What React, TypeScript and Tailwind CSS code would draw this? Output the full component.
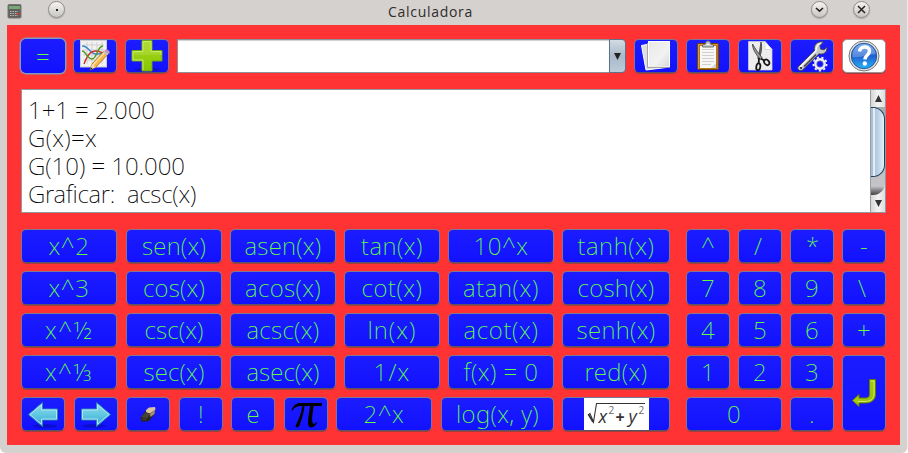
import { useLayoutEffect, useRef, useState } from "react";
import type { ReactNode } from "react";

const FONT = "font-['Noto_Sans','Open_Sans',sans-serif] font-extralight";

/** Text whose tracking is tuned at run time so it takes exactly `w` pixels. */
function Label({ text, w, className = "" }: { text: string; w: number; className?: string }) {
  const ref = useRef<HTMLSpanElement>(null);
  const [space, setSpace] = useState(0);
  useLayoutEffect(() => {
    const el = ref.current;
    if (!el) return;
    const previous = el.style.letterSpacing;
    el.style.letterSpacing = "0px";
    const natural = el.getBoundingClientRect().width;
    el.style.letterSpacing = previous;
    setSpace((w - natural) / text.length);
  }, [text, w]);
  return (
    <span ref={ref} className={`inline-block whitespace-pre ${className}`} style={{ letterSpacing: `${space}px` }}>
      {text}
    </span>
  );
}

const KEY =
  "flex h-[34px] items-center justify-center overflow-hidden rounded-[5px] border border-[#7d7794] border-b-[#5d5363] bg-linear-to-b from-[#1c1cff] to-[#1111ff] shadow-[0_1px_0_#a0403e]";

function Key({ text, w, className = "" }: { text: string; w: number; className?: string }) {
  return (
    <button className={`${KEY} ${FONT} text-[24px] leading-[32px] text-[#62ff42] ${className}`}>
      <Label text={text} w={w} />
    </button>
  );
}

function IconKey({ children, className = "" }: { children: ReactNode; className?: string }) {
  return <button className={`${KEY} ${className}`}>{children}</button>;
}

function GraphIcon() {
  return (
    <svg width="32" height="32" viewBox="0 0 32 32">
      <rect x="1.5" y=".5" width="26" height="26.500" fill="#f2f2f2" stroke="#ccc" />
      <path d="M4 5h21M4 10h21M4 15h21M4 20h21M8 2v22M13 2v22M18 2v22M23 2v22" stroke="#cfcfcf" fill="none" />
      <path d="M3 6c7 0 8 8 14 8 4 0 5-1 7 0" stroke="#3b87c8" strokeWidth="1.4" fill="none" />
      <path d="M5 24c3-8 6-13 12-13 4 0 5 2 8 2" stroke="#cc2b2b" strokeWidth="1.4" fill="none" />
      <path d="M3 11c4 0 5 8 10 8s5-13 11-13" stroke="#4b9a22" strokeWidth="1.4" fill="none" />
      <path d="M11 30l2-6L25 11l4 3-12 13z" fill="#f7b64c" stroke="#a96b1c" strokeWidth=".8" />
      <path d="M14 25L26 12" stroke="#ffe3a4" strokeWidth="1.3" />
      <path d="M24 12l2-2 4 3-2 2.500z" fill="#b9c3ce" />
      <path d="M26 10.500c2-2 6 1 4 3.200z" fill="#dc9bc9" stroke="#9a6da0" strokeWidth=".6" />
      <path d="M11 30l2-6 4 3z" fill="#f4d8a8" />
      <path d="M11 30l.9-2.700 1.700 1.500z" fill="#222" />
    </svg>
  );
}

function PlusIcon() {
  return (
    <svg width="34" height="32" viewBox="0 0 34 32">
      <defs>
        <linearGradient id="plus" x1="0" y1="0" x2="0" y2="1">
          <stop offset="0" stopColor="#a7d426" />
          <stop offset="1" stopColor="#88c800" />
        </linearGradient>
      </defs>
      <ellipse cx="17" cy="29.500" rx="13" ry="1.800" fill="#1015c8" />
      <path d="M12 .5h10v10h10v10.500h-10v10h-10v-10h-10v-10.500h10z" fill="url(#plus)" stroke="#6ea40c" />
      <path d="M13 30V20h-10v-8.500h10V1.500h8v10h10v3" fill="none" stroke="#c9ee6b" />
      <path d="M3 14.500v-3h10V1.500h8v10h10v3c-9 0-19 1-28 0z" fill="#c4e75c" opacity=".3" />
    </svg>
  );
}

function CopyIcon() {
  return (
    <svg width="32" height="32" viewBox="0 0 32 32">
      <defs>
        <linearGradient id="sheet" x1="0" y1="0" x2="1" y2="1">
          <stop offset="0" stopColor="#e8e8e8" />
          <stop offset=".6" stopColor="#f2f2f2" />
          <stop offset="1" stopColor="#d8d8d8" />
        </linearGradient>
      </defs>
      <path d="M1.500 5.500l8-1.500L26 27.500 6 30z" fill="#dedede" stroke="#fff" />
      <path d="M7.500 3v24.500h19" fill="none" stroke="#a5a5a5" />
      <rect x="8.500" y="1.500" width="21" height="25" fill="url(#sheet)" stroke="#fff" />
      <path d="M8 27.300h22" stroke="#a5a5a5" />
    </svg>
  );
}

function PasteIcon() {
  return (
    <svg width="32" height="32" viewBox="0 0 32 32">
      <rect x="5.500" y="3.500" width="21" height="26" rx="1" fill="#b87415" stroke="#6f4208" />
      <path d="M6.500 29V4.500h19" stroke="#d69a3d" fill="none" />
      <rect x="8" y="6" width="16" height="22" fill="#f7f7f7" />
      <path d="M10 9.500h12M10 12.500h12M10 15.500h12M10 18.500h12M10 21.500h12M10 24.500h9" stroke="#cfcfcf" />
      <path d="M19 28l5-5v5z" fill="#d4d4d4" />
      <path d="M10.500 7V5l3-1c0-4 5-4 5 0l3 1v2z" fill="#c4c4c0" stroke="#70706c" />
      <path d="M14.500 4.500h3" stroke="#fff" />
    </svg>
  );
}

function CutIcon() {
  return (
    <svg width="32" height="32" viewBox="0 0 32 32">
      <path d="M4.500 1.500H21l7 8V30H4.500z" fill="#ededed" stroke="#d5d5d5" strokeWidth=".7" />
      <path d="M21 1.500v8h7z" fill="#fff" stroke="#cfcfcf" strokeWidth=".7" />
      <path d="M17 2c1.500 6 0 11-1.500 17l-1.800-.6C15.500 13 16 8 17 2z" fill="#6c6e70" stroke="#333536" strokeWidth=".8" />
      <path d="M8.500 4c0 5 3 10 8 15.500l1.700-1.700C14 13 11.500 9 8.500 4z" fill="#9b9d9f" stroke="#333536" strokeWidth=".8" />
      <path d="M15 18l-.3 5M17 18.500l3 2" stroke="#171717" strokeWidth="1.800" />
      <ellipse cx="14.300" cy="26.800" rx="2" ry="3.400" fill="none" stroke="#171717" strokeWidth="1.800" transform="rotate(10 14.300 26.800)" />
      <ellipse cx="22.700" cy="22.300" rx="3" ry="2.300" fill="none" stroke="#171717" strokeWidth="1.800" transform="rotate(50 22.700 22.300)" />
    </svg>
  );
}

function ToolsIcon() {
  return (
    <svg width="34" height="32" viewBox="0 0 34 32">
      <path
        d="M3.500 26.500L19.500 10.500C18.500 5 22 1 28.500 2L25 5.500l.5 3.500 3.500.8L32 7c.3 5.500-3.500 8-8 6.800L7.500 30c-2.500 2-6.500-1-4-3.500z"
        fill="#c6c7c9"
        stroke="#3d4046"
        strokeWidth=".9"
      />
      <path d="M5 27L21 11c0-4 1.500-7 5-8" fill="none" stroke="#fff" strokeWidth="1.300" />
      <path d="M9 26.500l12-12" stroke="#3e4044" strokeWidth="1.200" />
      <circle cx="6" cy="28" r="1.100" fill="#222" />
      <circle cx="25" cy="24" r="4.600" fill="none" stroke="#f2f2f2" strokeWidth="2.600" />
      <circle cx="25" cy="24" r="6.600" fill="none" stroke="#ededed" strokeWidth="1.800" strokeDasharray="2.300 2.300" />
      <circle cx="25" cy="24" r="3.300" fill="none" stroke="#9697a8" strokeWidth=".7" />
    </svg>
  );
}

function HelpIcon() {
  return (
    <svg width="32" height="32" viewBox="0 0 32 32">
      <defs>
        <linearGradient id="help" x1="0" y1="0" x2="0" y2="1">
          <stop offset="0" stopColor="#5b9bea" />
          <stop offset=".5" stopColor="#1f60d0" />
          <stop offset="1" stopColor="#25b4fa" />
        </linearGradient>
      </defs>
      <circle cx="16" cy="16" r="15" fill="#e1e1e1" stroke="#777" />
      <circle cx="16" cy="16" r="12.700" fill="url(#help)" stroke="#24579c" />
      <path d="M4.500 17a11.500 11.500 0 0 1 23-3c-8 0-14 4-23 3z" fill="#fff" opacity=".25" />
      <path d="M11.500 11.500c.5-6 10-6 10-.5 0 4-4.500 4-4.500 8.500" fill="none" stroke="#fff" strokeWidth="3.400" />
      <circle cx="16.800" cy="23.500" r="2.200" fill="#fff" />
    </svg>
  );
}

function ArrowIcon({ flip = false }: { flip?: boolean }) {
  return (
    <svg width="32" height="30" viewBox="0 0 32 30" className={flip ? "-scale-x-100" : ""}>
      <defs>
        <linearGradient id={flip ? "arrow-r" : "arrow-l"} x1="0" y1="0" x2="0" y2="1">
          <stop offset="0" stopColor="#93d9ea" />
          <stop offset=".5" stopColor="#62c8e2" />
          <stop offset="1" stopColor="#2fa3cd" />
        </linearGradient>
      </defs>
      <ellipse cx="18" cy="27" rx="12" ry="2" fill="#0b10cf" />
      <path
        d="M1.500 15.500L15.500 3.500v6.500h15v11h-15V27.500z"
        fill={flip ? "url(#arrow-r)" : "url(#arrow-l)"}
        stroke="#2c86b4"
      />
      <path d="M3 15.500L14.500 5.700V11h15v9h-15v5.300z" fill="none" stroke="#b5e9f3" strokeWidth=".9" />
    </svg>
  );
}

function EraserIcon() {
  return (
    <svg width="18" height="18" viewBox="0 0 18 18" className="relative top-px">
      <path d="M2 11l6-8 7-1 1 2-1 5-5 6-7 1-1-2z" fill="#28251c" />
      <path d="M7 4l3-2.500 6-.5.500 2.500-5.500 4-4-1z" fill="#d9c3a0" />
      <path d="M11 8l5-4.500-.5 4.500-4 3z" fill="#a98e70" />
      <path d="M2 11l5-5 4 2-4 4z" fill="#454334" />
      <path d="M3 13l4 .5M7 13l4-5" stroke="#6a6650" strokeWidth=".6" />
    </svg>
  );
}

function PiIcon() {
  return (
    <svg width="34" height="30" viewBox="0 0 34 30">
      <path
        d="M2.500 11.500C4.500 6 7 4 11.500 4h21c.6 0 .6 3 0 3H24.500c-.8 7-2 13-1 16.500.5 2 2.500 1.600 4-.5l.5.600C26 29.500 19 30.500 19 24 19 18 20.500 12 21 7h-5.500c-.7 7-2.700 13-5 19.500-1 2.500-4.500 2.500-3.800 0C9.500 20.500 12.500 14 13.300 7 8.500 6.500 5.500 8 3.500 11.500z"
        fill="#000"
      />
    </svg>
  );
}

function EnterIcon() {
  return (
    <svg width="26" height="30" viewBox="0 0 26 30">
      <defs>
        <linearGradient id="enter" x1="0" y1="0" x2="1" y2="1">
          <stop offset="0" stopColor="#b5d70c" />
          <stop offset="1" stopColor="#8ebb0b" />
        </linearGradient>
      </defs>
      <path
        d="M18.500 1.500h6V16c0 6-4 9-10 9H8v3.500L1.500 22.500 8 16.500V20h6c3.500 0 4.500-1 4.500-5z"
        fill="url(#enter)"
        stroke="#637a06"
      />
      <path d="M20 3h3v13c0 5-4 7.500-9 7.500H7" fill="none" stroke="#daf06f" strokeWidth=".9" />
    </svg>
  );
}

function RootFormula() {
  return (
    <div className="relative h-[32px] w-[65px] bg-white font-['Open_Sans',sans-serif] text-[#333]">
      <svg className="absolute inset-0" width="65" height="32" viewBox="0 0 65 32">
        <path d="M4 17l2-1.500 3.500 8.500L12.500 5.500H61" fill="none" stroke="#333" strokeWidth="1.100" />
        <path d="M4.500 16.500L9 24" stroke="#333" strokeWidth="1.600" />
      </svg>
      <span className="absolute left-[15px] top-[8px] text-[18px] leading-[20px] italic">x</span>
      <span className="absolute left-[25px] top-[6px] text-[10px] leading-[12px] text-[#666]">2</span>
      <span className="absolute left-[32px] top-[9px] text-[16px] leading-[20px] font-bold">+</span>
      <span className="absolute left-[45px] top-[8px] text-[18px] leading-[20px] italic">y</span>
      <span className="absolute left-[55px] top-[6px] text-[10px] leading-[12px] text-[#666]">2</span>
    </div>
  );
}

const WINDOW_BUTTON =
  "flex size-[17px] items-center justify-center rounded-full border border-[#8f8d8b] bg-linear-to-b from-[#f5f4f3] to-[#c9c6c3] shadow-[0_1px_1px_#a9a6a3]";

function TitleBar() {
  return (
    <header className="grid h-[25px] grid-cols-[40px_348px_96px_326px_42px_1fr] items-start">
      <svg className="mt-[4px] ml-[7px]" width="15" height="15" viewBox="0 0 15 15">
        <rect x="1" y=".5" width="13" height="13.500" rx="1" fill="#60605c" stroke="#777" />
        <rect x="2" y="2" width="11" height="3" fill="#76a974" />
        <path d="M3 7.500h8M3 9.500h8M3 11.500h8" stroke="#b8b8b0" strokeDasharray="1.500 1" />
        <rect x="10" y="9" width="2" height="2" fill="#d33" />
      </svg>
      <span className={`${WINDOW_BUTTON} mt-[1px] ml-[8px]`}>
        <i className="size-[2px] bg-[#222]" />
      </span>
      <h1 className="mt-[3px] font-['Open_Sans','Noto_Sans',sans-serif] text-[14px] leading-[18px] font-normal text-[#2e2d2c]">
        <Label text="Calculadora" w={85} />
      </h1>
      <span className={`${WINDOW_BUTTON} mt-[1px] ml-[327px]`}>
        <svg width="9" height="9" viewBox="0 0 9 9">
          <path d="M1 3l3.500 3.200L8 3" fill="none" stroke="#222" strokeWidth="1.600" />
        </svg>
      </span>
      <span className={`${WINDOW_BUTTON} mt-[1px] ml-[43px]`}>
        <svg width="9" height="9" viewBox="0 0 9 9">
          <path d="M1 1l7 7M8 1L1 8" fill="none" stroke="#222" strokeWidth="1.500" />
        </svg>
      </span>
    </header>
  );
}

function Toolbar() {
  return (
    <div className="flex h-[34px] items-start gap-2">
      <button
        className={`flex h-[34px] w-[44px] items-center justify-center rounded-[5px] bg-linear-to-b from-[#1c1cff] to-[#1111ff] text-[24px] leading-[32px] text-[#62ff42] shadow-[0_0_0_1.500px_#7c9cc0] ${FONT}`}
      >
        <Label text="=" w={14} className="relative top-px" />
      </button>
      <IconKey className="w-[44px]"><GraphIcon /></IconKey>
      <IconKey className="w-[44px]"><PlusIcon /></IconKey>
      <div className="flex h-[34px] w-[449px]">
        <div className="h-full flex-1 border border-r-0 border-[#8e9298] bg-white shadow-[inset_0_1px_1px_#cfcfcf]" />
        <button className="flex w-[17px] items-center justify-center rounded-r-[4px] border border-[#5f7186] bg-linear-to-b from-[#d3dbe3] via-[#a9b9ca] to-[#bccbd9]">
          <svg width="7" height="7" viewBox="0 0 7 7">
            <path d="M0 0h7L3.500 7z" fill="#222" />
          </svg>
        </button>
      </div>
      <IconKey className="w-[44px]"><CopyIcon /></IconKey>
      <IconKey className="w-[44px]"><PasteIcon /></IconKey>
      <IconKey className="w-[44px]"><CutIcon /></IconKey>
      <IconKey className="w-[44px]"><ToolsIcon /></IconKey>
      <button className="flex h-[34px] w-[44px] items-center justify-center overflow-hidden rounded-[5px] border border-[#a08c93] bg-white shadow-[0_1px_0_#a0403e]">
        <HelpIcon />
      </button>
    </div>
  );
}

const HISTORY = [
  { text: "1+1 = 2.000", w: 127 },
  { text: "G(x)=x", w: 69 },
  { text: "G(10) = 10.000", w: 157 },
  { text: "Graficar:  acsc(x)", w: 168 },
];

function History() {
  return (
    <div className="mt-[16px] flex h-[124px] border border-[#94979d] bg-white">
      <div className={`flex-1 pt-[6px] pl-[6px] text-[24px] leading-[28px] text-black ${FONT}`}>
        {HISTORY.map((line) => (
          <div key={line.text} className="h-[28px]">
            <Label text={line.text} w={line.w} />
          </div>
        ))}
      </div>
      <div className="flex w-[15px] flex-col border-l border-[#999ca1] bg-linear-to-r from-[#d6d6d8] via-[#f4f4f4] to-[#dedee0]">
        <div className="flex h-[17px] items-center justify-center">
          <svg width="7" height="7" viewBox="0 0 7 7">
            <path d="M0 7h7L3.500 0z" fill="#333" />
          </svg>
        </div>
        <div className="h-[88px] overflow-hidden rounded-br-[12px] bg-linear-to-b from-[#aaa] via-[#c5c5c9] via-90% to-[#444]">
          <div className="h-[70px] rounded-r-[12px] border border-l-0 border-[#23405f] bg-linear-to-r from-[#a4bcd6] via-[#b9cfe4] to-[#e1f2fd]">
            <div className="ml-[2px] h-full w-[2px] bg-[#e2edf7]" />
          </div>
        </div>
        <div className="flex flex-1 items-center justify-center">
          <svg width="7" height="7" viewBox="0 0 7 7">
            <path d="M0 0h7L3.500 7z" fill="#333" />
          </svg>
        </div>
      </div>
    </div>
  );
}

type KeyDef = [text: string, width: number];

const FUNCTION_ROWS: KeyDef[][] = [
  [["x^2", 41], ["sen(x)", 64], ["asen(x)", 77], ["tan(x)", 62], ["10^x", 55], ["tanh(x)", 77]],
  [["x^3", 41], ["cos(x)", 62], ["acos(x)", 76], ["cot(x)", 61], ["atan(x)", 76], ["cosh(x)", 77]],
  [["x^½", 48], ["csc(x)", 59], ["acsc(x)", 73], ["ln(x)", 49], ["acot(x)", 75], ["senh(x)", 79]],
  [["x^⅓", 48], ["sec(x)", 61], ["asec(x)", 73], ["1/x", 37], ["f(x) = 0", 75], ["red(x)", 63]],
];

const PAD_KEYS: KeyDef[] = [
  ["^", 14], ["/", 12], ["*", 12], ["-", 8],
  ["7", 14], ["8", 14], ["9", 14], ["\\", 12],
  ["4", 14], ["5", 14], ["6", 14], ["+", 14],
  ["1", 14], ["2", 14], ["3", 14],
];

function Keyboard() {
  return (
    <div className="mt-[16px] flex justify-between">
      <div className="flex w-[649px] flex-col gap-2">
        {FUNCTION_ROWS.map((row) => (
          <div key={row[0][0]} className="grid grid-cols-[97px_96px_106px_96px_106px_108px] gap-2">
            {row.map(([text, w], column) => (
              <Key key={text} text={text} w={w} className={column === 0 ? "mr-px" : ""} />
            ))}
          </div>
        ))}
        <div className="grid grid-cols-[45px_44px_45px_44px_45px_44px_97px_113px_108px] gap-2">
          <IconKey className="mr-px"><ArrowIcon /></IconKey>
          <IconKey><ArrowIcon flip /></IconKey>
          <IconKey className="mr-px"><EraserIcon /></IconKey>
          <Key text="!" w={6} />
          <Key text="e" w={13} className="mr-px" />
          <IconKey><PiIcon /></IconKey>
          <Key text="2^x" w={41} className="mr-px" />
          <Key text="log(x, y)" w={83} />
          <IconKey><RootFormula /></IconKey>
        </div>
      </div>
      <div className="grid w-[200px] grid-cols-4 gap-2">
        {PAD_KEYS.map(([text, w]) => (
          <Key key={text} text={text} w={w} />
        ))}
        <IconKey className="row-span-2 h-[76px]"><EnterIcon /></IconKey>
        <Key text="0" w={14} className="col-span-2" />
        <Key text="." w={6} />
      </div>
    </div>
  );
}

export default function App() {
  return (
    <div className="h-[453px] w-[908px] overflow-hidden rounded-b-[6px] border-r border-[#eceae8] bg-[#d5d1ce]">
      <TitleBar />
      <main className="ml-[7px] h-[420px] w-[893px] bg-[#ff3333] pt-[14px] pr-[14px] pl-[14px]">
        <Toolbar />
        <History />
        <Keyboard />
      </main>
    </div>
  );
}
